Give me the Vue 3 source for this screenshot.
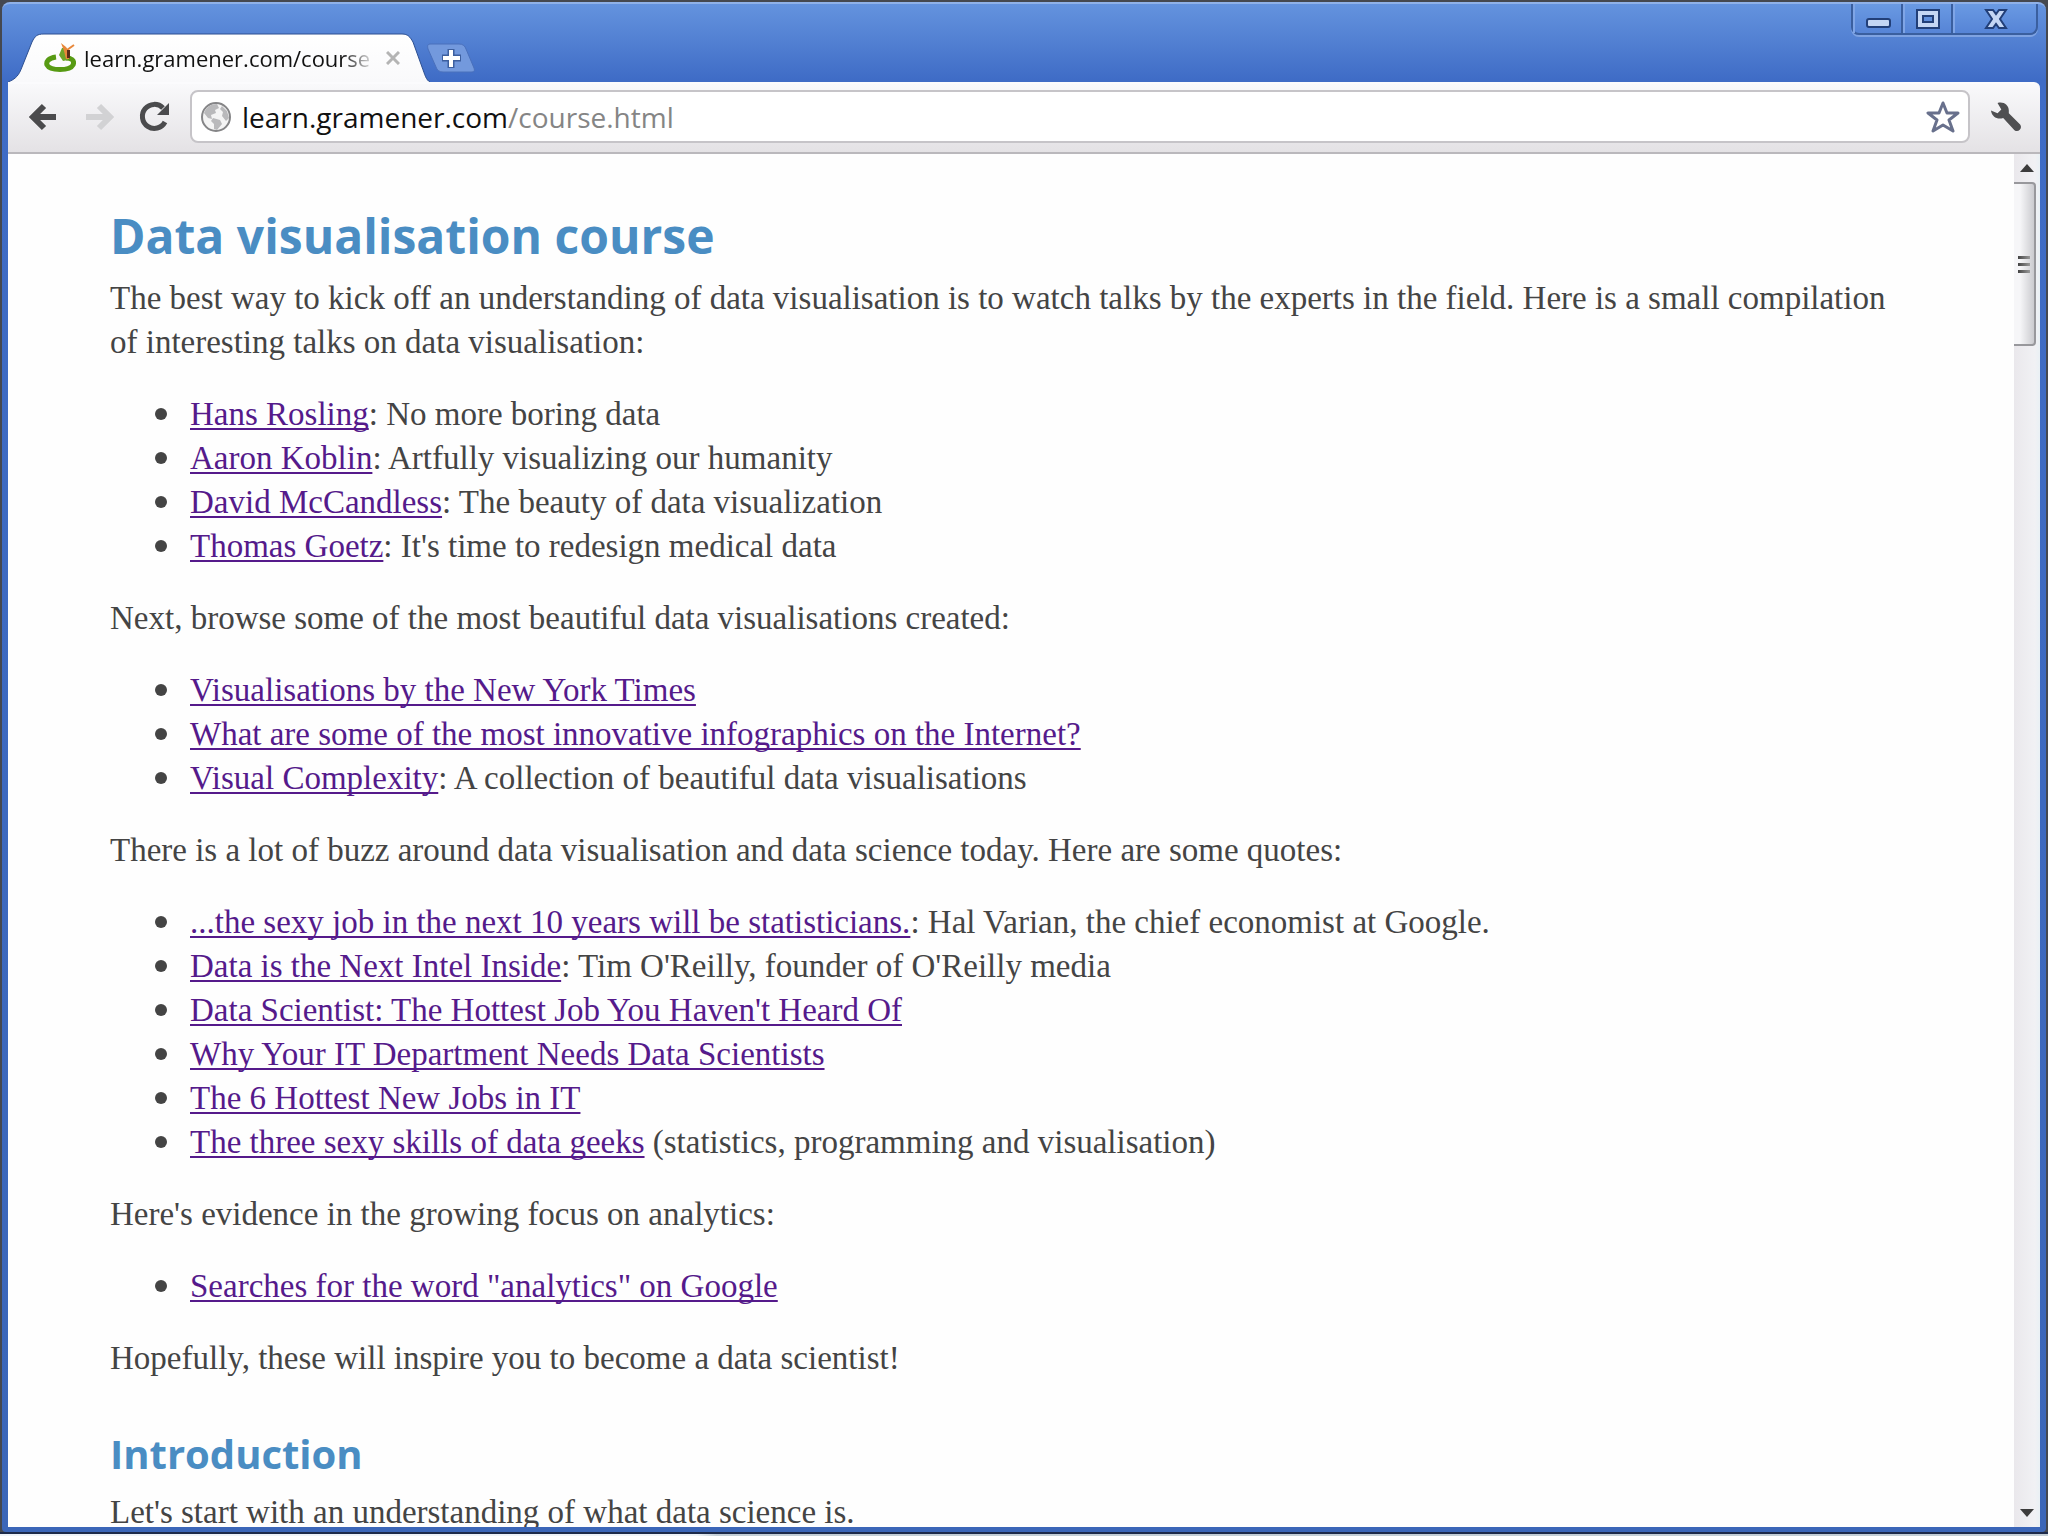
<template>
  <div class="desktop">
    <div class="window">
      <header class="titlebar">
        <div class="tabs">
          <div class="tab">
            <svg class="tab-shape" viewBox="0 0 422 49">
              <defs>
                <linearGradient id="tabFill" x1="0" y1="0" x2="0" y2="1">
                  <stop offset="0" stop-color="#ffffff" />
                  <stop offset="1" stop-color="#f9f9fb" />
                </linearGradient>
              </defs>
              <path
                d="M0 49 C8 46 11 42 14 34 L24 9 C27 3 29 1 36 1 H394 C400 1 402 4 405 9 L414 34 C417 42 418 47 422 49 Z"
                fill="url(#tabFill)"
              />
              <path
                d="M0 49 C8 46 11 42 14 34 L24 9 C27 3 29 1 36 1 H394 C400 1 402 4 405 9 L414 34 C417 42 418 47 422 49"
                fill="none"
                stroke="#2d4f90"
                stroke-width="1"
              />
            </svg>
            <svg class="favicon" viewBox="0 0 32 32">
              <path d="M12 15 C4 16 2 20 3 23 C6 29 26 29 29 23 C31 18 27 16 22 16" fill="none" stroke="#579a13" stroke-width="5" />
              <path d="M18 6 H22 L24 18 L19 19 L15 13 Z" fill="#6fa52a" />
              <path d="M22 5 L25 9 L25 17 H22 L20 9 L17 1 Z" fill="#e8873a" />
              <path d="M23 8 L30 3" stroke="#e8873a" stroke-width="2" />
              <path d="M23 8 H26 V16 H23 Z" fill="#5a2c18" />
            </svg>
            <span class="tab-title">learn.gramener.com/course</span>
            <button class="tab-close" aria-label="Close tab">
              <svg viewBox="0 0 14 14"><path d="M1 1 L13 13 M13 1 L1 13" stroke="#b4b4b4" stroke-width="3" /></svg>
            </button>
          </div>
          <button class="new-tab" aria-label="New tab">
            <svg viewBox="0 0 50 30">
              <path d="M5 1 H33 C37 1 39 3 40 6 L48 25 C49 28 48 29 45 29 H17 C13 29 11 27 10 24 L2 6 C1 2 2 1 5 1 Z" fill="#7399dd" stroke="#4a70bb" />
              <path d="M25 6 V25 M16 15 H35" stroke="#3d5f9f" stroke-width="7" />
              <path d="M25 7 V24 M17 15 H34" stroke="#fff" stroke-width="4" />
            </svg>
          </button>
        </div>
        <div class="controls">
          <button aria-label="Minimize">
            <svg viewBox="0 0 28 22"><rect x="2" y="11" width="23" height="8" rx="2" fill="#c4d6f4" stroke="#223f78" stroke-width="2" /></svg>
          </button>
          <button aria-label="Maximize">
            <svg viewBox="0 0 28 22">
              <path d="M2 2 H24 V20 H2 Z M8 8 V14 H18 V8 Z" fill="#c4d6f4" fill-rule="evenodd" stroke="#223f78" stroke-width="2" />
            </svg>
          </button>
          <button class="control-close" aria-label="Close">
            <svg viewBox="0 0 28 22">
              <path d="M4 2 H11 L14 6 L17 2 H24 L18 11 L24 20 H17 L14 16 L11 20 H4 L10 11 Z" fill="#c4d6f4" stroke="#223f78" stroke-width="2" />
            </svg>
          </button>
        </div>
      </header>

      <nav class="toolbar">
        <button aria-label="Back">
          <svg viewBox="0 0 32 32"><path d="M28 16 H6 M16 5 L5 16 L16 27" fill="none" stroke="#4b4b4d" stroke-width="6" /></svg>
        </button>
        <button aria-label="Forward">
          <svg viewBox="0 0 32 32"><path d="M3 16 H26 M16 5 L27 16 L16 27" fill="none" stroke="#d2d2d4" stroke-width="6" /></svg>
        </button>
        <button aria-label="Reload">
          <svg viewBox="0 0 32 32">
            <path d="M25 7 A12 12 0 1 0 27 21" fill="none" stroke="#4b4b4d" stroke-width="5" />
            <path d="M31 2 V14 H19 Z" fill="#4b4b4d" />
          </svg>
        </button>
        <div class="address">
          <svg class="globe" viewBox="0 0 32 32">
            <circle cx="16" cy="16" r="14" fill="#f4f4f4" stroke="#858587" stroke-width="2" />
            <path d="M4 12 C6 6 11 3 17 3 L19 7 L15 9 L16 12 L11 14 L12 18 L8 17 Z" fill="#b9b9bb" />
            <path d="M13 17 L20 19 L22 23 L17 29 L14 28 L14 23 L11 20 Z" fill="#b9b9bb" />
            <path d="M22 5 L27 10 L29 17 L26 20 L22 15 L23 11 L20 8 Z" fill="#b9b9bb" />
          </svg>
          <div class="url" role="textbox" aria-label="Address" tabindex="0">learn.gramener.com<span>/course.html</span></div>
          <button aria-label="Bookmark this page">
            <svg viewBox="0 0 34 34">
              <path d="M17 3 L21 13 L32 13 L23 20 L27 31 L17 25 L7 31 L11 20 L2 13 L13 13 Z" fill="#fff" stroke="#68708c" stroke-width="3" stroke-linejoin="round" />
            </svg>
          </button>
        </div>
        <button class="wrench" aria-label="Customize">
          <svg viewBox="0 0 34 34">
            <path d="M8 2 C14 0 20 4 20 10 L20 13 L32 25 C35 29 30 34 26 31 L14 18 C8 20 2 17 1 10 L8 13 L12 9 Z" fill="#4f4f51" />
          </svg>
        </button>
      </nav>

      <div class="viewport">
        <main class="page">
          <h1>Data visualisation course</h1>
          <template v-for="section in sections" :key="section.text">
            <p>{{ section.text }}</p>
            <ul v-if="section.items">
              <li v-for="item in section.items" :key="item.link">
                <a href="#">{{ item.link }}</a>{{ item.note }}
              </li>
            </ul>
          </template>
          <h2>Introduction</h2>
          <p>Let's start with an understanding of what data science is.</p>
        </main>
        <div class="scrollbar">
          <svg class="arrow" viewBox="0 0 14 8"><path d="M7 0 L14 8 H0 Z" fill="#3c3c3c" /></svg>
          <div class="thumb"><i></i><i></i><i></i></div>
          <svg class="arrow arrow-down" viewBox="0 0 14 8"><path d="M0 0 H14 L7 8 Z" fill="#3c3c3c" /></svg>
        </div>
      </div>
    </div>
    <div class="behind"></div>
  </div>
</template>

<script setup>
const sections = [
  {
    text: 'The best way to kick off an understanding of data visualisation is to watch talks by the experts in the field. Here is a small compilation of interesting talks on data visualisation:',
    items: [
      { link: 'Hans Rosling', note: ': No more boring data' },
      { link: 'Aaron Koblin', note: ': Artfully visualizing our humanity' },
      { link: 'David McCandless', note: ': The beauty of data visualization' },
      { link: 'Thomas Goetz', note: ": It's time to redesign medical data" }
    ]
  },
  {
    text: 'Next, browse some of the most beautiful data visualisations created:',
    items: [
      { link: 'Visualisations by the New York Times' },
      { link: 'What are some of the most innovative infographics on the Internet?' },
      { link: 'Visual Complexity', note: ': A collection of beautiful data visualisations' }
    ]
  },
  {
    text: 'There is a lot of buzz around data visualisation and data science today. Here are some quotes:',
    items: [
      { link: '...the sexy job in the next 10 years will be statisticians.', note: ': Hal Varian, the chief economist at Google.' },
      { link: 'Data is the Next Intel Inside', note: ": Tim O'Reilly, founder of O'Reilly media" },
      { link: "Data Scientist: The Hottest Job You Haven't Heard Of" },
      { link: 'Why Your IT Department Needs Data Scientists' },
      { link: 'The 6 Hottest New Jobs in IT' },
      { link: 'The three sexy skills of data geeks', note: ' (statistics, programming and visualisation)' }
    ]
  },
  {
    text: "Here's evidence in the growing focus on analytics:",
    items: [{ link: 'Searches for the word "analytics" on Google' }]
  },
  { text: 'Hopefully, these will inspire you to become a data scientist!' }
]
</script>

<style>
body {
  margin: 0;
}
</style>

<style scoped>
.desktop {
  box-sizing: border-box;
  display: flex;
  flex-direction: column;
  height: 100vh;
  padding-top: 2px;
  background: #45484f;
  overflow: hidden;
}

.window {
  box-sizing: border-box;
  display: flex;
  flex-direction: column;
  flex: 1;
  min-height: 0;
  margin: 0 2px;
  padding: 0 6px 5px;
  border-top: 2px solid #8fb1e8;
  border-radius: 8px 8px 4px 4px;
  background: linear-gradient(#6493de, #3f6cc6 76px, #3b66b8);
  overflow: hidden;
}

/* top edge of the window lying underneath */
.behind {
  flex: none;
  height: 2px;
  border-top: 2px solid #1d2a4a;
  background: linear-gradient(to right, #eef3f8 34%, #c3ced6 35%);
}

button {
  display: flex;
  align-items: center;
  justify-content: center;
  padding: 0;
  border: 0;
  background: none;
}

.titlebar {
  display: flex;
  justify-content: space-between;
  align-items: flex-start;
  flex: none;
  height: 78px;
}

.tabs {
  display: flex;
  align-items: center;
  align-self: flex-end;
}

.tab {
  position: relative;
  display: flex;
  align-items: center;
  box-sizing: border-box;
  width: 422px;
  height: 49px;
  padding: 0 30px 0 36px;
}

.tab-shape {
  position: absolute;
  inset: 0;
  width: 100%;
  height: 100%;
}

.favicon {
  position: relative;
  width: 32px;
  height: 32px;
  margin-right: 8px;
}

.tab-title {
  position: relative;
  flex: 1;
  white-space: nowrap;
  font: 22px/32px "Open Sans", "Noto Sans", sans-serif;
  color: #111;
  mask-image: linear-gradient(to right, #000 88%, transparent);
}

.tab-close {
  position: relative;
  width: 14px;
  height: 14px;
  margin-left: 10px;
}

.tab-close svg {
  width: 14px;
  height: 14px;
}

.new-tab {
  margin-left: -4px;
}

.new-tab svg {
  width: 50px;
  height: 30px;
}

.controls {
  display: flex;
  margin-right: 2px;
  border: 2px solid #3a5f9f;
  border-top: 0;
  border-radius: 0 0 8px 8px;
  box-shadow: 0 2px 0 #7fa3e2;
  background: linear-gradient(#6a9ae3, #5684d6);
}

.controls button {
  width: 50px;
  height: 29px;
  border-left: 2px solid #7fa5e6;
}

.controls button + button {
  box-shadow: -2px 0 0 #3a5f9f;
}

.controls .control-close {
  width: 83px;
}

.controls svg {
  width: 28px;
  height: 22px;
}

.toolbar {
  display: flex;
  align-items: center;
  flex: none;
  gap: 23px;
  box-sizing: border-box;
  height: 72px;
  padding: 0 18px 3px 20px;
  border-top: 2px solid #fbfbfd;
  border-bottom: 2px solid #bab8bc;
  border-radius: 0 6px 0 0;
  background: linear-gradient(#f9f9fb, #e4e2e5);
}

.toolbar > button svg {
  width: 32px;
  height: 32px;
}

.address {
  display: flex;
  align-items: center;
  flex: 1;
  box-sizing: border-box;
  height: 53px;
  margin: 0 -3px;
  padding: 0 8px;
  border: 2px solid #c6c4c8;
  border-radius: 8px;
  background: #fff;
}

.globe {
  width: 32px;
  height: 32px;
  margin-right: 10px;
}

.url {
  flex: 1;
  font: 28px/40px "Open Sans", "Noto Sans", sans-serif;
  color: #111;
}

.url span {
  color: #858585;
}

.address button svg {
  width: 34px;
  height: 34px;
}

.viewport {
  display: flex;
  flex: 1;
  min-height: 0;
  background: #fefefe;
  overflow: hidden;
}

.page {
  flex: 1;
  padding: 50px 116px 0 102px;
  font: 33px/44px "Liberation Serif", serif;
  color: #444;
}

h1,
h2 {
  margin: 0;
  font-family: "Open Sans", "Noto Sans", sans-serif;
  font-weight: 700;
  color: #4a8dc3;
}

h1 {
  padding-bottom: 8px;
  font-size: 48px;
  line-height: 64px;
}

h2 {
  padding: 18px 0 8px;
  font-size: 40px;
  line-height: 56px;
}

p {
  margin: 0 0 28px;
}

ul {
  margin: 0 0 28px;
  padding: 0 0 0 80px;
  list-style: none;
}

li::before {
  content: "";
  display: inline-block;
  width: 12px;
  height: 12px;
  margin: 0 23px 5px -35px;
  border-radius: 50%;
  background: #444;
}

a {
  color: #551a8b;
  text-decoration-thickness: 2px;
  text-underline-offset: 3px;
  text-decoration-skip-ink: none;
}

.scrollbar {
  display: flex;
  flex-direction: column;
  align-items: center;
  box-sizing: border-box;
  width: 26px;
  padding: 10px 0 10px;
  background: linear-gradient(to right, #eae8ec, #f1f1f4 80%, #e9f0f4);
}

.arrow {
  width: 14px;
  height: 8px;
}

.thumb {
  display: flex;
  flex-direction: column;
  align-items: center;
  justify-content: center;
  align-self: flex-start;
  gap: 4px;
  box-sizing: border-box;
  width: 22px;
  height: 164px;
  margin-top: 10px;
  border: 2px solid #98989c;
  border-left: 0;
  border-radius: 0 4px 4px 0;
  background: linear-gradient(to right, #f6f6f8 30%, #cbcbcf);
}

.thumb i {
  width: 12px;
  height: 3px;
  background: linear-gradient(to right, #444, #999);
}

.arrow-down {
  margin-top: auto;
}
</style>
